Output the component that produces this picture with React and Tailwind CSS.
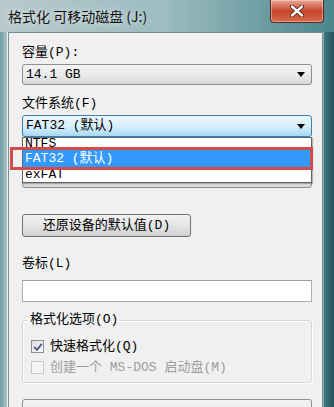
import React from "react";

function Arrow() {
  return (
    <svg width="8" height="5" viewBox="0 0 8 5" className="block">
      <path d="M0 0 H8 L4 5 Z" fill="#000" />
    </svg>
  );
}

function Check() {
  return (
    <svg width="10" height="10" viewBox="0 0 10 10" className="block">
      <path d="M1.2 5 L4 7.8 L8.8 1.8" fill="none" stroke="#4a5f8e" strokeWidth="1.9" />
    </svg>
  );
}

export default function App() {
  return (
    <div className="w-[334px] h-[407px] overflow-hidden flex flex-col bg-gradient-to-r from-[#b8c9ce] via-[#9bbcc0] to-[#4a868d] font-['Liberation_Mono','Noto_Sans_CJK_SC',monospace] text-[13px] text-black">
      {/* title bar */}
      <div className="h-[32px] shrink-0 flex items-start">
        <div className="pl-[8px] pt-[7px] text-[14px] leading-[18px] font-['Noto_Sans_CJK_SC',sans-serif] text-[#111] [text-shadow:0_0_6px_rgba(255,255,255,0.9)]">
          格式化 可移动磁盘 (J:)
        </div>
        <div className="ml-auto mr-[10px] w-[54px] h-[23px] rounded-b-[4px] border border-t-0 border-[#5a2a22] bg-gradient-to-b from-[#e7a797] via-[#c7432d] to-[#d66a4a] flex items-center justify-center shadow-[inset_0_0_0_1px_rgba(255,255,255,0.35)]">
          <svg width="14" height="12" viewBox="0 0 14 12">
            <path d="M2 1.5 L12 10.5 M12 1.5 L2 10.5" stroke="#4a2018" strokeWidth="4.2" strokeLinecap="round" />
            <path d="M2 1.5 L12 10.5 M12 1.5 L2 10.5" stroke="#fff" strokeWidth="2.4" strokeLinecap="round" />
          </svg>
        </div>
      </div>

      <div className="flex flex-1 min-h-0">
        <div className="w-[8px] bg-gradient-to-r from-[#6f9ea3] to-[#a9c4c8] border-r border-[#e9f1f2]" />
        <div className="flex-1 relative bg-[#f0f0f0] border-l border-t border-r border-[#7a8d92] pl-[13px] pr-[10px] flex flex-col">
          <div className="mt-[13px] leading-[14px]">容量(P):</div>
          <div className="mt-[4px] h-[21px] shrink-0 rounded-[3px] border border-[#8e8f8f] bg-gradient-to-b from-[#f4f4f4] via-[#ebebeb] to-[#d8d8d8] flex items-center pl-[3px] pr-[6px]">
            <span className="leading-[14px]">14.1 GB</span>
            <span className="ml-auto"><Arrow /></span>
          </div>

          <div className="mt-[12px] leading-[14px]">文件系统(F)</div>
          <div className="mt-[4px] h-[22px] shrink-0 rounded-[3px] border border-[#3c7fb1] bg-gradient-to-b from-[#eaf6fd] via-[#d9f0fc] to-[#a7d9f5] flex items-center pl-[3px] pr-[6px]">
            <span className="leading-[14px]">FAT32 (默认)</span>
            <span className="ml-auto"><Arrow /></span>
          </div>

          {/* allocation unit label + combo, hidden beneath the open list */}
          <div className="mt-[10px] h-[14px] shrink-0" />
          <div className="mt-[5px] h-[22px] shrink-0 rounded-[3px] border border-[#8e8f8f] bg-gradient-to-b from-[#f4f4f4] via-[#ebebeb] to-[#d8d8d8] flex items-center pl-[3px] pr-[6px]">
            <span className="ml-auto"><Arrow /></span>
          </div>

          <div className="mt-[26px] w-[169px] h-[23px] shrink-0 rounded-[3px] border border-[#707070] bg-gradient-to-b from-[#f2f2f2] via-[#e6e6e6] to-[#d0d0d0] flex items-center justify-center">
            <span className="leading-[14px]">还原设备的默认值(D)</span>
          </div>

          <div className="mt-[20px] leading-[14px]">卷标(L)</div>
          <div className="mt-[9px] h-[22px] shrink-0 border border-[#abadb3] border-t-[#9a9ca2] bg-white" />

          <fieldset className="mt-[11px] border border-[#d5d8da] rounded-[3px] pb-[8px] shadow-[inset_1px_1px_0_#fff,1px_1px_0_#fff]">
            <legend className="ml-[5px] px-[2px] leading-[14px]">格式化选项(O)</legend>
            <div className="px-[8px]">
              <div className="mt-[13px] flex items-center h-[13px]">
                <div className="w-[13px] h-[13px] border border-[#8f8f8f] bg-gradient-to-br from-[#dcdcdc] to-[#fbfbfb] flex items-center justify-center">
                  <Check />
                </div>
                <span className="ml-[6px] leading-[14px]">快速格式化(Q)</span>
              </div>
              <div className="mt-[8px] flex items-center h-[13px]">
                <div className="w-[13px] h-[13px] border border-[#c8c8c8] bg-[#f4f4f4]" />
                <span className="ml-[6px] leading-[14px] text-[#9d9d9d]">创建一个 MS-DOS 启动盘(M)</span>
              </div>
            </div>
          </fieldset>

          <div className="mt-[16px] h-[22px] shrink-0 rounded-[3px] border border-[#8e8f8f] bg-gradient-to-b from-[#f4f4f4] to-[#e4e4e4]" />

          {/* dropdown list */}
          <div className="absolute left-[13px] top-[104px] w-[290px] h-[46px] bg-white border border-[#646464] flex flex-col shadow-[1px_1px_1px_rgba(0,0,0,0.25)]">
            <div className="h-[12px] pl-[2px] leading-[12px]">NTFS</div>
            <div className="h-[18px] pl-[2px] bg-[#3399ff] text-white flex items-center leading-[14px]">FAT32 (默认)</div>
            <div className="h-[14px] pl-[2px] flex items-center leading-[14px]">exFAT</div>
          </div>
          {/* red highlight */}
          <div className="absolute left-[1px] top-[114px] w-[303px] h-[23px] border-[3px] border-[#d24a4a]" />
        </div>
        <div className="w-[11px] bg-gradient-to-r from-[#3d7a82] to-[#25535a] border-l border-[#89aeb3]" />
      </div>
    </div>
  );
}
